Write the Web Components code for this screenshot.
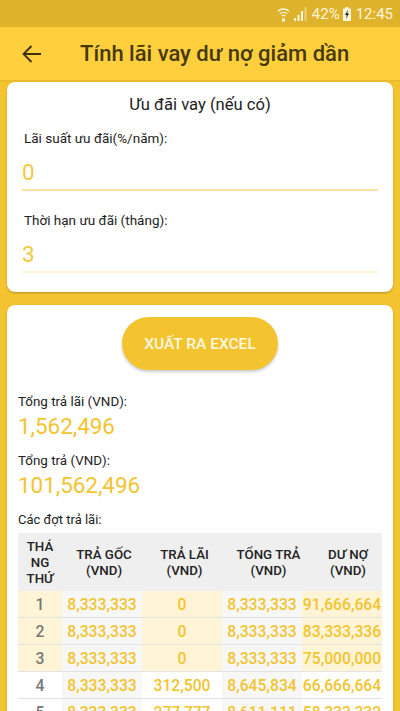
<!DOCTYPE html>
<html lang="vi">
<head>
<meta charset="utf-8">
<title>Tính lãi vay dư nợ giảm dần</title>
<style>
  html, body { margin: 0; height: 711px; overflow: hidden; background: #f3c42f; font-family: Roboto, "Noto Sans", sans-serif; }
</style>
</head>
<body>
<my-status-bar></my-status-bar>
<my-app-bar>Tính lãi vay dư nợ giảm dần</my-app-bar>
<my-card class="first">
  <my-card-title>Ưu đãi vay (nếu có)</my-card-title>
  <my-field label="Lãi suất ưu đãi(%/năm):" value="0" line="#fbe3a0"></my-field>
  <my-field label="Thời hạn ưu đãi (tháng):" value="3" line="#fdf3d6"></my-field>
</my-card>
<my-card class="second">
  <my-button>XUẤT RA EXCEL</my-button>
  <my-stat label="Tổng trả lãi (VND):" value="1,562,496"></my-stat>
  <my-stat label="Tổng trả (VND):" value="101,562,496"></my-stat>
  <my-schedule></my-schedule>
</my-card>

<script>
class BaseComponent extends HTMLElement {
  constructor() {
    super();
    this.attachShadow({ mode: 'open' });
  }

  connectedCallback() {
    this.render();
  }

  render(template) {
    this.shadowRoot.innerHTML = template;
  }
}

class StatusBar extends BaseComponent {
  render() {
    super.render(`
      <style>
        :host {
          display: flex;
          height: 27px;
          align-items: center;
          justify-content: flex-end;
          padding-right: 7px;
          background: #dfb22b;
          color: #fdf6df;
          font-size: 15px;
        }
        svg { display: block; }
        .wifi { margin-right: 4px; }
        .signal { margin-right: 5px; }
        .battery { margin: 0 5px 0 3px; }
      </style>
      <svg class="wifi" width="13" height="16" viewBox="0 0 13 16" fill="none" stroke="#fdf6df" stroke-width="1.4">
        <path d="M1 5.2a8 8 0 0 1 11 0"/>
        <path d="M3 7.8a5 5 0 0 1 7 0"/>
        <path d="M4.8 10a2.4 2.4 0 0 1 3.4 0"/>
        <path d="M5 12.5h3v3H5z" fill="#fdf6df" stroke="none"/>
      </svg>
      <svg class="signal" width="13" height="14" viewBox="0 0 13 14" fill="#fdf6df">
        <rect x="0" y="11" width="2" height="3"/>
        <rect x="3.5" y="8" width="2" height="6"/>
        <rect x="7" y="4" width="2" height="10"/>
        <rect x="10.5" y="0" width="2" height="14" opacity=".45"/>
      </svg>
      <span>42%</span>
      <svg class="battery" width="8" height="14" viewBox="0 0 8 14">
        <path d="M2.5 0h3v1.5H8V14H0V1.5h2.5z" fill="#fdf6df"/>
        <path d="M5 2.5 2 8h1.8L3 12l3-5.5H4.2z" fill="#222"/>
      </svg>
      <span>12:45</span>
    `);
  }
}

class AppBar extends BaseComponent {
  render() {
    super.render(`
      <style>
        :host {
          display: flex;
          height: 53px;
          align-items: center;
          background: #ffcf3e;
          color: #453909;
          box-shadow: 0 1px 2px rgba(0, 0, 0, .08);
          position: relative;
        }
        svg { display: block; margin-left: 22px; }
        .title {
          margin-left: 39px;
          font-size: 22px;
          font-weight: 500;
          white-space: nowrap;
        }
      </style>
      <svg width="19" height="18" viewBox="0 0 19 18" fill="none" stroke="#3b2f08" stroke-width="1.8">
        <path d="M19 9H1.5M9.5 1 1.5 9l8 8"/>
      </svg>
      <div class="title"><slot></slot></div>
    `);
  }
}

class Card extends BaseComponent {
  render() {
    const first = this.classList.contains('first');
    super.render(`
      <style>
        :host {
          display: block;
          box-sizing: border-box;
          margin: ${first ? '2px 7px 13px' : '0 7px'};
          height: ${first ? '210px' : '420px'};
          padding: ${first ? '11px 15px 0 15px' : '12px 11px 0 11px'};
          background: #fff;
          border-radius: ${first ? '8px' : '8px 8px 0 0'};
          box-shadow: 0 1px 2px rgba(0, 0, 0, .25);
        }
      </style>
      <slot></slot>
    `);
  }
}

class CardTitle extends BaseComponent {
  render() {
    super.render(`
      <style>
        :host {
          display: block;
          text-align: center;
          font-size: 16.6px;
          line-height: 24px;
          color: #222;
        }
      </style>
      <slot></slot>
    `);
  }
}

class Field extends BaseComponent {
  render() {
    super.render(`
      <style>
        :host {
          display: block;
          margin-top: 11px;
          margin-bottom: 19px;
        }
        label {
          display: block;
          padding-left: 2px;
          font-size: 13.5px;
          line-height: 20px;
          color: #222;
        }
        .value {
          margin-top: 10px;
          height: 31px;
          line-height: 28px;
          font-size: 22.4px;
          color: #f5c842;
          border-bottom: 2px solid ${this.getAttribute('line')};
        }
      </style>
      <label>${this.getAttribute('label')}</label>
      <div class="value">${this.getAttribute('value')}</div>
    `);
  }
}

class ExportButton extends BaseComponent {
  render() {
    super.render(`
      <style>
        :host {
          display: flex;
          box-sizing: border-box;
          width: 156px;
          height: 53px;
          margin: 0 auto 21px;
          align-items: center;
          justify-content: center;
          border-radius: 27px;
          background: #f3c42f;
          color: #fff8e3;
          font-size: 15.5px;
          font-weight: 500;
          box-shadow: 0 2px 3px rgba(0, 0, 0, .2);
        }
      </style>
      <slot></slot>
    `);
  }
}

class Stat extends BaseComponent {
  render() {
    super.render(`
      <style>
        :host { display: block; margin-bottom: 9px; padding-top: 1px; }
        .label { font-size: 13.4px; line-height: 20px; color: #222; }
        .value { font-size: 22.4px; line-height: 29px; color: #f3c42f; }
      </style>
      <div class="label">${this.getAttribute('label')}</div>
      <div class="value">${this.getAttribute('value')}</div>
    `);
  }
}

class Schedule extends BaseComponent {
  render() {
    const head = ['THÁ<br>NG<br>THỨ', 'TRẢ GỐC<br>(VND)', 'TRẢ LÃI<br>(VND)', 'TỔNG TRẢ<br>(VND)', 'DƯ NỢ<br>(VND)'];
    const rows = [
      ['1', '8,333,333', '0', '8,333,333', '91,666,664'],
      ['2', '8,333,333', '0', '8,333,333', '83,333,336'],
      ['3', '8,333,333', '0', '8,333,333', '75,000,000'],
      ['4', '8,333,333', '312,500', '8,645,834', '66,666,664'],
      ['5', '8,333,333', '277,777', '8,611,111', '58,333,332']
    ];
    super.render(`
      <style>
        :host { display: block; padding-top: 1px; }
        .caption { font-size: 13px; line-height: 20px; color: #222; margin-bottom: 3px; }
        .heads, .grid { display: grid; width: 364px; }
        .heads {
          grid-template-columns: 44px 84px 77px 91px 68px;
          background: #efefef;
        }
        .grid { grid-template-columns: 44px 80px 80px 80px 80px; }
        .head {
          display: flex;
          box-sizing: border-box;
          height: 58px;
          padding-top: 1px;
          align-items: center;
          justify-content: center;
          text-align: center;
          color: #222;
          font-size: 13.3px;
          font-weight: 500;
          line-height: 16px;
        }
        .cell {
          height: 26px;
          line-height: 27px;
          text-align: center;
          font-size: 15.7px;
          font-weight: 500;
          color: #f3c42f;
          border-bottom: 1px solid #e2e2e2;
          white-space: nowrap;
        }
        .no { color: #777; }
        .even { background: #f7f7f7; }
        .paid { background: #fff5d6; }
        .paid.even { background: #f7f7f7; }
      </style>
      <div class="caption">Các đợt trả lãi:</div>
      <div class="heads">
        ${head.map(h => `<div class="head"><span>${h}</span></div>`).join('')}
      </div>
      <div class="grid">
        ${rows.map((r, i) => r.map((c, j) => {
          const cls = ['cell'];
          if (j === 0) cls.push('no');
          if (j % 2 === 1) cls.push('even');
          if (i < 3) cls.push('paid');
          return `<div class="${cls.join(' ')}">${c}</div>`;
        }).join('')).join('')}
      </div>
    `);
  }
}

window.customElements.define('my-status-bar', StatusBar);
window.customElements.define('my-app-bar', AppBar);
window.customElements.define('my-card', Card);
window.customElements.define('my-card-title', CardTitle);
window.customElements.define('my-field', Field);
window.customElements.define('my-button', ExportButton);
window.customElements.define('my-stat', Stat);
window.customElements.define('my-schedule', Schedule);
</script>
</body>
</html>
